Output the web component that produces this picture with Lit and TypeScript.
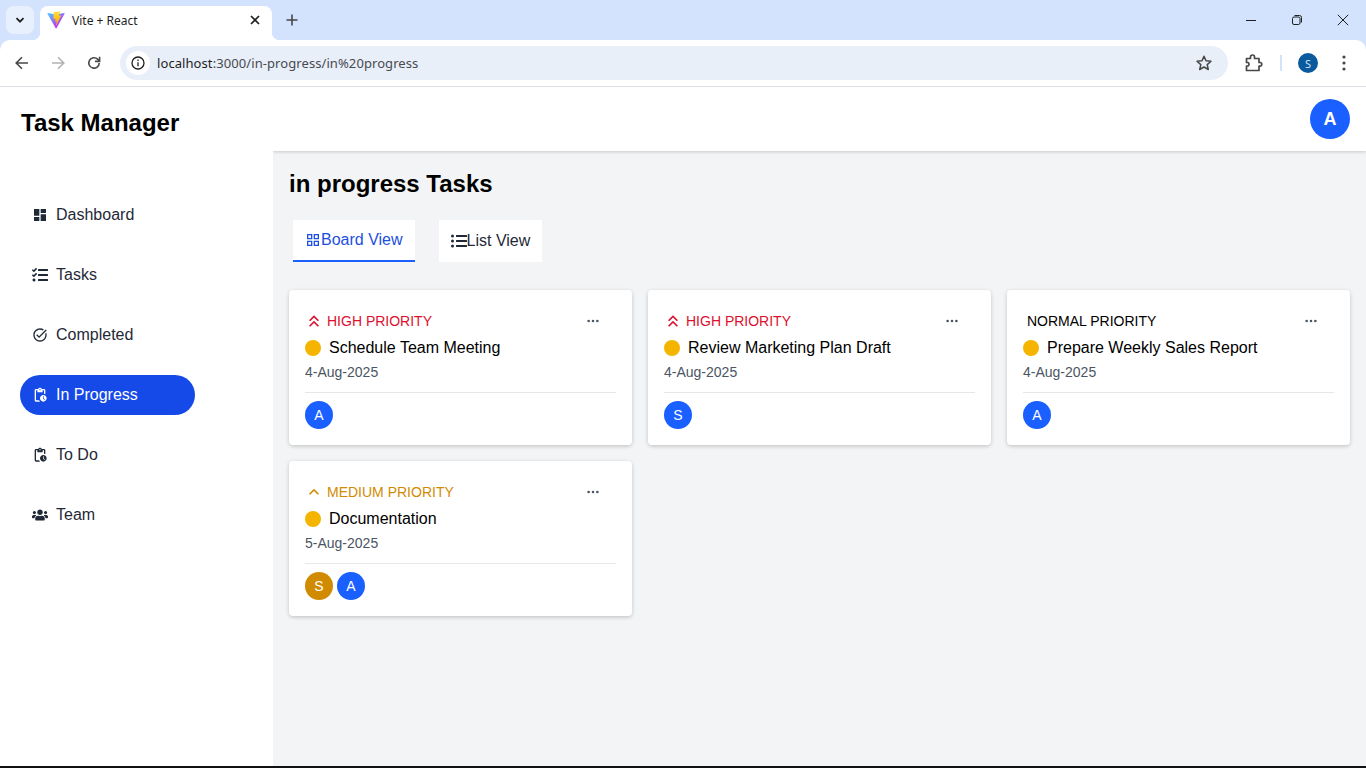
import { LitElement, html, css, svg } from "lit";
import { customElement } from "lit/decorators.js";

const BLUE = "#1a5fff";
const AMBER = "#d18b00";

const icon = (d: string, box = "0 0 24 24", cls = "") =>
  html`<svg class="ic ${cls}" viewBox=${box} fill="currentColor"><path d=${d}></path></svg>`;

const P = {
  dashboard: "M3 13h8V3H3v10zm0 8h8v-6H3v6zm10 0h8V11h-8v10zm0-18v6h8V3h-8z",
  tasks:
    "M139.61 35.5a12 12 0 0 0-17 0L58.93 98.81l-22.7-22.12a12 12 0 0 0-17 0L3.53 92.41a12 12 0 0 0 0 17l47.59 47.4a12.78 12.78 0 0 0 17.61 0l15.59-15.62L156.52 69a12.09 12.09 0 0 0 .09-17zm0 159.19a12 12 0 0 0-17 0l-63.68 63.72-22.7-22.1a12 12 0 0 0-17 0L3.53 252a12 12 0 0 0 0 17L51 316.5a12.77 12.77 0 0 0 17.6 0l15.7-15.69 72.2-72.22a12 12 0 0 0 .09-16.9zM64 368c-26.49 0-48.59 21.5-48.59 48S37.53 464 64 464a48 48 0 0 0 0-96zm432 16H208a16 16 0 0 0-16 16v32a16 16 0 0 0 16 16h288a16 16 0 0 0 16-16v-32a16 16 0 0 0-16-16zm0-320H208a16 16 0 0 0-16 16v32a16 16 0 0 0 16 16h288a16 16 0 0 0 16-16V80a16 16 0 0 0-16-16zm0 160H208a16 16 0 0 0-16 16v32a16 16 0 0 0 16 16h288a16 16 0 0 0 16-16v-32a16 16 0 0 0-16-16z",
  done: "M22 5.18L10.59 16.6l-4.24-4.24 1.41-1.41 2.83 2.83 10-10L22 5.18zm-2.21 5.04c.13.57.21 1.17.21 1.78 0 4.42-3.58 8-8 8s-8-3.58-8-8 3.58-8 8-8c1.58 0 3.04.46 4.28 1.25l1.44-1.44C16.1 2.67 14.13 2 12 2 6.48 2 2 6.48 2 12s4.48 10 10 10 10-4.48 10-10c0-1.19-.22-2.33-.6-3.39l-1.61 1.61z",
  pending:
    "M17 12c-2.76 0-5 2.24-5 5s2.24 5 5 5 5-2.24 5-5-2.24-5-5-5zm1.65 7.35L16.5 17.2V14h1v2.79l1.85 1.85-.7.71zM18 3h-3.18C14.4 1.84 13.3 1 12 1s-2.4.84-2.82 2H6c-1.1 0-2 .9-2 2v15c0 1.1.9 2 2 2h6.11c-.59-.57-1.07-1.25-1.42-2H6V5h2v3h8V5h2v5.08c.71.1 1.38.31 2 .6V5c0-1.1-.9-2-2-2zm-6 2c-.55 0-1-.45-1-1s.45-1 1-1 1 .45 1 1-.45 1-1 1z",
  users:
    "M96 224c35.3 0 64-28.7 64-64s-28.7-64-64-64-64 28.7-64 64 28.7 64 64 64zm448 0c35.3 0 64-28.7 64-64s-28.7-64-64-64-64 28.7-64 64 28.7 64 64 64zm32 32h-64c-17.6 0-33.5 7.1-45.1 18.6 40.3 22.1 68.9 62 75.1 109.4h66c17.7 0 32-14.3 32-32v-32c0-35.3-28.7-64-64-64zm-256 0c61.9 0 112-50.1 112-112S381.9 32 320 32 208 82.1 208 144s50.1 112 112 112zm76.8 32h-8.3c-20.8 10-43.9 16-68.5 16s-47.6-6-68.5-16h-8.3C179.6 288 128 339.6 128 403.2V432c0 26.5 21.5 48 48 48h288c26.5 0 48-21.5 48-48v-28.8c0-63.6-51.6-115.2-115.2-115.2zm-223.7-13.4C161.5 263.1 145.6 256 128 256H64c-35.3 0-64 28.7-64 64v32c0 17.7 14.3 32 32 32h65.9c6.3-47.4 34.9-87.3 75.2-109.4z",
  grid: "M3 3v8h8V3H3zm6 6H5V5h4v4zm-6 4v8h8v-8H3zm6 6H5v-4h4v4zm4-16v8h8V3h-8zm6 6h-4V5h4v4zm-6 4v8h8v-8h-8zm6 6h-4v-4h4v4z",
  list: "M48 48a48 48 0 1 0 48 48 48 48 0 0 0-48-48zm0 160a48 48 0 1 0 48 48 48 48 0 0 0-48-48zm0 160a48 48 0 1 0 48 48 48 48 0 0 0-48-48zm448 16H176a16 16 0 0 0-16 16v32a16 16 0 0 0 16 16h320a16 16 0 0 0 16-16v-32a16 16 0 0 0-16-16zm0-320H176a16 16 0 0 0-16 16v32a16 16 0 0 0 16 16h320a16 16 0 0 0 16-16V80a16 16 0 0 0-16-16zm0 160H176a16 16 0 0 0-16 16v32a16 16 0 0 0 16 16h320a16 16 0 0 0 16-16v-32a16 16 0 0 0-16-16z",
  up2: "M6 17.59L7.41 19 12 14.42 16.59 19 18 17.59l-6-6zM6 11l1.41 1.41L12 7.83l4.59 4.58L18 11l-6-6z",
  up1: "M7.41 15.41L12 10.83l4.59 4.58L18 14l-6-6-6 6z",
  dots: "M3 9.5a1.5 1.5 0 1 1 0-3 1.5 1.5 0 0 1 0 3zm5 0a1.5 1.5 0 1 1 0-3 1.5 1.5 0 0 1 0 3zm5 0a1.5 1.5 0 1 1 0-3 1.5 1.5 0 0 1 0 3z",
};

const NAV = [
  { label: "Dashboard", d: P.dashboard, box: "0 0 24 24" },
  { label: "Tasks", d: P.tasks, box: "0 0 512 512" },
  { label: "Completed", d: P.done, box: "0 0 24 24" },
  { label: "In Progress", d: P.pending, box: "0 0 24 24", active: true },
  { label: "To Do", d: P.pending, box: "0 0 24 24" },
  { label: "Team", d: P.users, box: "0 0 640 512" },
];

type Task = {
  priority: "high" | "medium" | "normal";
  title: string;
  date: string;
  team: { name: string; color: string }[];
};

const TASKS: Task[] = [
  { priority: "high", title: "Schedule Team Meeting", date: "4-Aug-2025", team: [{ name: "A", color: BLUE }] },
  { priority: "high", title: "Review Marketing Plan Draft", date: "4-Aug-2025", team: [{ name: "S", color: BLUE }] },
  { priority: "normal", title: "Prepare Weekly Sales Report", date: "4-Aug-2025", team: [{ name: "A", color: BLUE }] },
  {
    priority: "medium",
    title: "Documentation",
    date: "5-Aug-2025",
    team: [
      { name: "S", color: AMBER },
      { name: "A", color: BLUE },
    ],
  },
];

const viteLogo = svg`
  <defs>
    <linearGradient id="vg1" x1="6" y1="33" x2="235" y2="344" gradientUnits="userSpaceOnUse">
      <stop stop-color="#41D1FF"></stop><stop offset="1" stop-color="#BD34FE"></stop>
    </linearGradient>
    <linearGradient id="vg2" x1="194" y1="8" x2="236" y2="292" gradientUnits="userSpaceOnUse">
      <stop stop-color="#FFEA83"></stop><stop offset=".08" stop-color="#FFDD35"></stop><stop offset="1" stop-color="#FFA800"></stop>
    </linearGradient>
  </defs>
  <path fill="url(#vg1)" d="M399.641 59.5246L215.643 388.545C211.844 395.338 202.084 395.378 198.228 388.618L10.5817 59.5563C6.38087 52.1896 12.6802 43.2665 21.0281 44.7586L205.223 77.6824C206.398 77.8924 207.601 77.8904 208.776 77.6763L389.119 44.8058C397.439 43.2894 403.768 52.1434 399.641 59.5246Z"></path>
  <path fill="url(#vg2)" d="M292.965 1.5744L156.801 28.2552C154.563 28.6937 152.906 30.5903 152.771 32.8664L144.395 174.33C144.198 177.662 147.258 180.248 150.51 179.498L188.42 170.749C191.967 169.931 195.172 173.055 194.443 176.622L183.18 231.775C182.422 235.487 185.907 238.661 189.532 237.56L212.947 230.446C216.577 229.344 220.065 232.527 219.297 236.242L201.398 322.875C200.278 328.294 207.486 331.249 210.492 326.603L212.5 323.5L323.454 102.072C325.312 98.3645 322.108 94.137 318.036 94.9228L279.014 102.454C275.347 103.161 272.227 99.746 273.262 96.1583L298.731 7.86689C299.767 4.27314 296.636 0.855181 292.965 1.5744Z"></path>
`;

@customElement("browser-chrome")
export class BrowserChrome extends LitElement {
  static styles = css`
    :host {
      display: block;
      font-family: "Noto Sans", "Open Sans", sans-serif;
      color: #1f1f1f;
    }

    .strip {
      height: 40px;
      background: #d3e3fd;
      display: flex;
      align-items: flex-start;
    }

    .tab-search {
      width: 28px;
      height: 28px;
      margin: 6px 6px 0;
      border-radius: 8px;
      background: #e9f0fd;
      display: flex;
      align-items: center;
      justify-content: center;
    }

    .tab {
      position: relative;
      width: 232px;
      height: 34px;
      margin-top: 6px;
      background: #fff;
      border-radius: 8px 8px 0 0;
      display: flex;
      align-items: center;
      padding: 0 9px 6px 8px;
      box-sizing: border-box;
      font-size: 12px;
    }

    .tab::before,
    .tab::after {
      content: "";
      position: absolute;
      bottom: 0;
      width: 8px;
      height: 8px;
    }

    .tab::before {
      left: -8px;
      background: radial-gradient(circle at 0 0, transparent 8px, #fff 8.5px);
    }

    .tab::after {
      right: -8px;
      background: radial-gradient(circle at 100% 0, transparent 8px, #fff 8.5px);
    }

    .favicon {
      width: 18px;
      height: 18px;
      flex: none;
      margin-left: -1px;
    }

    .tab-title {
      flex: 1;
      margin-left: 7px;
      white-space: nowrap;
    }

    .new-tab {
      width: 16px;
      height: 16px;
      margin: 12px 0 0 12px;
    }

    .window {
      margin-left: auto;
      display: flex;
    }

    .win-btn {
      width: 46px;
      height: 40px;
      display: flex;
      align-items: center;
      justify-content: center;
    }

    .toolbar-bg {
      background: #d3e3fd;
    }

    .toolbar {
      height: 46px;
      background: #fff;
      border-radius: 10px 10px 0 0;
      border-bottom: 1px solid #dcdfe3;
      display: flex;
      align-items: center;
    }

    .nav-btn {
      width: 36px;
      height: 34px;
      display: flex;
      align-items: center;
      justify-content: center;
      flex: none;
    }

    .nav-btn:first-child {
      margin-left: 4px;
    }

    .omnibox {
      flex: 1;
      height: 34px;
      margin-left: 8px;
      border-radius: 17px;
      background: #e9eff9;
      display: flex;
      align-items: center;
      padding: 0 10px 0 6px;
    }

    .info {
      width: 24px;
      height: 24px;
      border-radius: 50%;
      background: #fff;
      display: flex;
      align-items: center;
      justify-content: center;
      flex: none;
    }

    .url {
      margin-left: 7px;
      font-size: 13px;
      letter-spacing: 0.08px;
      flex: 1;
      color: #474a4f;
      white-space: nowrap;
    }

    .url b {
      font-weight: 400;
      color: #1f1f1f;
    }

    .star {
      width: 28px;
      height: 28px;
      display: flex;
      align-items: center;
      justify-content: center;
    }

    .actions {
      display: flex;
      align-items: center;
      flex: none;
      width: 138px;
      height: 34px;
    }

    .puzzle {
      margin-left: 16px;
      width: 20px;
      height: 20px;
    }

    .sep {
      width: 2px;
      height: 16px;
      background: #d3e3fd;
      margin-left: 16px;
    }

    .profile {
      width: 20px;
      height: 20px;
      border-radius: 50%;
      background: #0b5a9e;
      color: #cfe4f7;
      font-size: 11px;
      display: flex;
      align-items: center;
      justify-content: center;
      margin-left: 16px;
    }

    .menu {
      margin-left: 16px;
      width: 20px;
      height: 20px;
    }
  `;

  protected render() {
    return html`
      <div class="strip">
        <div class="tab-search">
          <svg width="12" height="12" viewBox="0 0 12 12" fill="none" stroke="#1f1f1f" stroke-width="1.8"><path d="M2.5 4.2 6 7.7l3.5-3.5"></path></svg>
        </div>
        <div class="tab">
          <svg class="favicon" viewBox="0 0 410 404" fill="none">${viteLogo}</svg>
          <span class="tab-title">Vite + React</span>
          <svg width="16" height="16" viewBox="0 0 16 16" fill="none" stroke="#1f1f1f" stroke-width="1.7"><path d="M4 4l8 8M12 4l-8 8"></path></svg>
        </div>
        <svg class="new-tab" viewBox="0 0 16 16" fill="none" stroke="#444746" stroke-width="1.6"><path d="M8 2.5v11M2.5 8h11"></path></svg>
        <div class="window">
          <div class="win-btn">
            <svg width="12" height="12" viewBox="0 0 12 12" fill="none" stroke="#1f1f1f"><path d="M1 6.5h10"></path></svg>
          </div>
          <div class="win-btn">
            <svg width="12" height="12" viewBox="0 0 12 12" fill="none" stroke="#1f1f1f"><rect x="1.5" y="3" width="7.5" height="7.5" rx="1.5"></rect><path d="M3.5 1.5h5a2 2 0 0 1 2 2v5"></path></svg>
          </div>
          <div class="win-btn">
            <svg width="12" height="12" viewBox="0 0 12 12" fill="none" stroke="#1f1f1f"><path d="M.8.8l10.4 10.4M11.2.8.8 11.2"></path></svg>
          </div>
        </div>
      </div>
      <div class="toolbar-bg">
        <div class="toolbar">
          <div class="nav-btn">
            <svg width="16" height="16" viewBox="0 0 16 16" fill="none" stroke="#474747" stroke-width="1.6"><path d="M14 8H2.5M8 2.2 2.2 8 8 13.8"></path></svg>
          </div>
          <div class="nav-btn">
            <svg width="16" height="16" viewBox="0 0 16 16" fill="none" stroke="#b0b2b5" stroke-width="1.6"><path d="M2 8h11.5M8 2.2 13.8 8 8 13.8"></path></svg>
          </div>
          <div class="nav-btn">
            <svg width="16" height="16" viewBox="0 0 16 16" fill="none" stroke="#474747" stroke-width="1.6"><path d="M13.2 8a5.2 5.2 0 1 1-1.6-3.8L13.4 6"></path><path d="M13.6 1.8v4.6H9"></path></svg>
          </div>
          <div class="omnibox">
            <div class="info">
              <svg width="16" height="16" viewBox="0 0 16 16" fill="none" stroke="#1f1f1f" stroke-width="1.3"><circle cx="8" cy="8" r="6"></circle><path d="M8 7.2v4M8 4.6v1.4"></path></svg>
            </div>
            <span class="url"><b>localhost</b>:3000/in-progress/in%20progress</span>
            <div class="star">
              <svg width="18" height="18" viewBox="0 0 18 18" fill="none" stroke="#474747" stroke-width="1.5" stroke-linejoin="round"><path d="M9 2.2l2 4.6 5 .5-3.8 3.3 1.1 4.9L9 13l-4.3 2.5 1.1-4.9L2 7.3l5-.5z"></path></svg>
            </div>
          </div>
          <div class="actions">
            <svg class="puzzle" viewBox="0 0 20 20" fill="none" stroke="#474747" stroke-width="1.7" stroke-linejoin="round"><path d="M2.5 5.5h4V4a2 2 0 0 1 4 0v1.5h4.5v4h1a1.6 1.6 0 0 1 0 3.6h-1V17.5H2.5v-4.5H4a2 2 0 0 0 0-3.5H2.5z"></path></svg>
            <div class="sep"></div>
            <div class="profile">S</div>
            <svg class="menu" viewBox="0 0 20 20" fill="#474747"><circle cx="10" cy="4" r="1.6"></circle><circle cx="10" cy="10" r="1.6"></circle><circle cx="10" cy="16" r="1.6"></circle></svg>
          </div>
        </div>
      </div>
    `;
  }
}

@customElement("task-card")
export class TaskCard extends LitElement {
  static properties = { task: { attribute: false } };
  declare task: Task;

  static styles = css`
    :host {
      display: block;
      background: #fff;
      border-radius: 4px;
      box-shadow: 0 1px 4px rgba(0, 0, 0, 0.16), 0 2px 4px -1px rgba(0, 0, 0, 0.08);
      padding: 16px;
      height: 155px;
      box-sizing: border-box;
    }

    .ic {
      display: block;
      flex: none;
    }

    .top {
      display: flex;
      align-items: center;
      justify-content: space-between;
      height: 30px;
      padding-right: 16px;
    }

    .pri {
      display: flex;
      align-items: center;
      gap: 3px;
      font-size: 14px;
      text-transform: uppercase;
    }

    .pri .ic {
      width: 20px;
      height: 20px;
      margin-left: -1px;
    }

    .high {
      color: #dc0f2e;
    }

    .medium {
      color: #d18b00;
    }

    .normal {
      color: #000;
      padding-left: 4px;
    }

    .more {
      width: 14px;
      height: 14px;
      color: #4b5563;
    }

    .title-row {
      display: flex;
      align-items: center;
      gap: 8px;
      height: 20px;
      margin-top: 2px;
      font-size: 16px;
      color: #000;
    }

    .dot {
      width: 16px;
      height: 16px;
      border-radius: 50%;
      background: #f4b400;
      flex: none;
    }

    .date {
      font-size: 14px;
      line-height: 20px;
      color: #4b5563;
      margin-top: 4px;
    }

    .team {
      border-top: 1px solid #e5e7eb;
      margin-top: 10px;
      padding-top: 8px;
      display: flex;
      gap: 4px;
    }

    .av {
      width: 28px;
      height: 28px;
      border-radius: 50%;
      color: #fff;
      font-size: 14px;
      display: flex;
      align-items: center;
      justify-content: center;
    }
  `;

  protected render() {
    const t = this.task;
    const upIcon = t.priority === "high" ? P.up2 : t.priority === "medium" ? P.up1 : "";
    return html`
      <div class="top">
        <div class="pri ${t.priority}">
          ${upIcon ? icon(upIcon) : ""}
          <span>${t.priority} priority</span>
        </div>
        ${icon(P.dots, "0 0 16 16", "more")}
      </div>
      <div class="title-row"><span class="dot"></span><span>${t.title}</span></div>
      <div class="date">${t.date}</div>
      <div class="team">
        ${t.team.map((m) => html`<div class="av" style="background:${m.color}">${m.name}</div>`)}
      </div>
    `;
  }
}

@customElement("app-root")
export class AppRoot extends LitElement {
  static styles = css`
    :host {
      display: flex;
      flex-direction: column;
      height: 768px;
      overflow: hidden;
      font-family: "Liberation Sans", Arial, sans-serif;
      background: #f3f4f6;
    }

    .ic {
      display: block;
      flex: none;
      width: 16px;
      height: 16px;
    }

    .app {
      flex: 1;
      display: flex;
      min-height: 0;
      border-bottom: 2px solid #111;
    }

    .sidebar {
      width: 273px;
      flex: none;
      background: #fff;
      box-sizing: border-box;
      padding: 22px 20px 0;
    }

    .logo {
      font-size: 24px;
      line-height: 28px;
      font-weight: 700;
      color: #000;
      margin: 0 0 0 1px;
    }

    nav {
      margin-top: 58px;
      display: flex;
      flex-direction: column;
      gap: 20px;
    }

    .nav-item {
      width: 175px;
      height: 40px;
      border-radius: 20px;
      display: flex;
      align-items: center;
      gap: 8px;
      padding-left: 12px;
      box-sizing: border-box;
      font-size: 16px;
      color: #1f2937;
    }

    .nav-item.active {
      background: #1549e8;
      color: #fff;
    }

    .main {
      flex: 1;
      min-width: 0;
      display: flex;
      flex-direction: column;
    }

    header {
      height: 64px;
      flex: none;
      background: #fff;
      box-shadow: 0 1px 3px rgba(0, 0, 0, 0.18);
      clip-path: inset(0 0 -6px 0);
      display: flex;
      align-items: center;
      justify-content: flex-end;
      padding-right: 16px;
    }

    .user {
      width: 40px;
      height: 40px;
      border-radius: 50%;
      background: #1a5fff;
      color: #fff;
      font-size: 18px;
      font-weight: 700;
      display: flex;
      align-items: center;
      justify-content: center;
    }

    .content {
      padding: 18px 16px 0;
    }

    h2 {
      font-size: 24px;
      line-height: 30px;
      font-weight: 700;
      color: #000;
      margin: 0;
    }

    .tabs {
      display: flex;
      gap: 24px;
      margin: 21px 0 28px 4px;
    }

    .tab {
      height: 42px;
      padding: 0 12px;
      background: #fff;
      display: flex;
      align-items: center;
      font-size: 16px;
      color: #1f2937;
      box-sizing: border-box;
    }

    .tab.active {
      color: #1d4fe0;
      border-bottom: 2px solid #1a5fff;
    }

    .cards {
      display: grid;
      grid-template-columns: repeat(3, 1fr);
      gap: 16px;
    }
  `;

  protected render() {
    return html`
      <browser-chrome></browser-chrome>
      <div class="app">
        <aside class="sidebar">
          <h1 class="logo">Task Manager</h1>
          <nav>
            ${NAV.map(
              (n) => html`
                <div class="nav-item ${n.active ? "active" : ""}">
                  ${icon(n.d, n.box)}
                  <span>${n.label}</span>
                </div>
              `
            )}
          </nav>
        </aside>
        <div class="main">
          <header><div class="user">A</div></header>
          <div class="content">
            <h2>in progress Tasks</h2>
            <div class="tabs">
              <div class="tab active">${icon(P.grid)}<span>Board View</span></div>
              <div class="tab">${icon(P.list, "0 0 512 512")}<span>List View</span></div>
            </div>
            <div class="cards">
              ${TASKS.map((t) => html`<task-card .task=${t}></task-card>`)}
            </div>
          </div>
        </div>
      </div>
    `;
  }
}
